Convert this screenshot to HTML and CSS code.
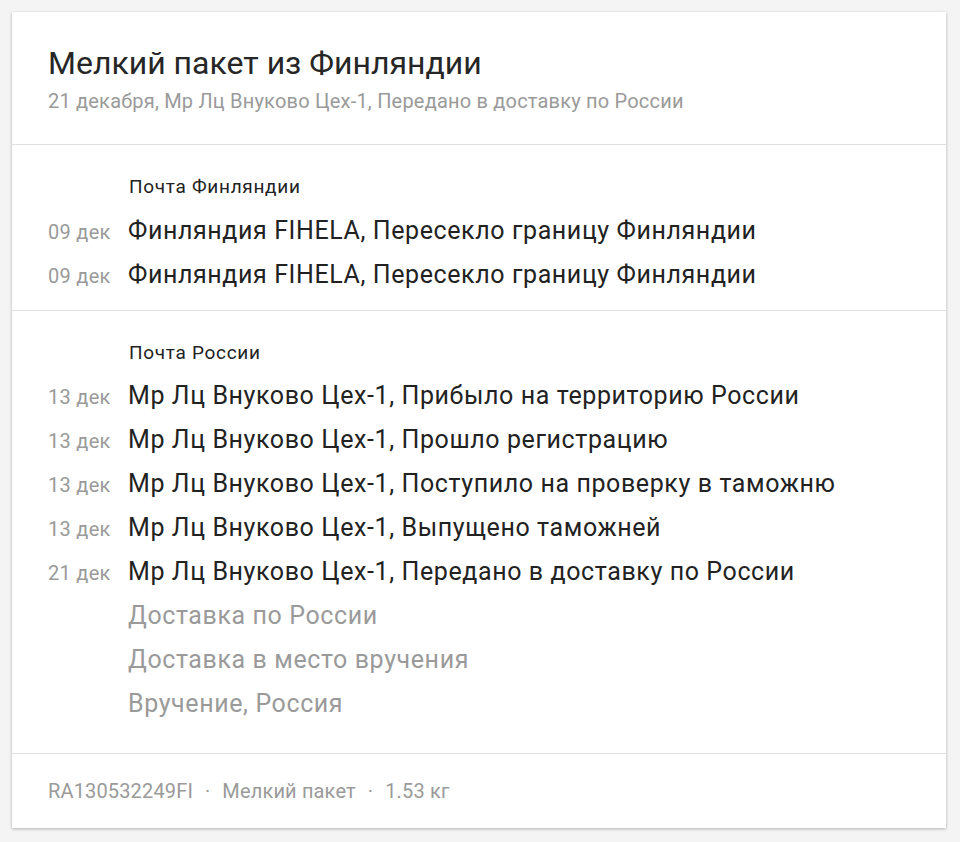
FILE: index.html
```html
<!DOCTYPE html>
<html lang="ru">
<head>
<meta charset="utf-8">
<title>Мелкий пакет из Финляндии</title>
<link rel="stylesheet" href="styles.css">
</head>
<body>
<div class="card">
  <header class="head">
    <h1 class="title">Мелкий пакет из Финляндии</h1>
    <div class="sub">21 декабря, Мр Лц Внуково Цех-1, Передано в доставку по России</div>
  </header>
  <section class="group g1">
    <div class="label">Почта Финляндии</div>
    <div class="row"><span class="date">09 дек</span><span class="ev">Финляндия FIHELA, Пересекло границу Финляндии</span></div>
    <div class="row"><span class="date">09 дек</span><span class="ev">Финляндия FIHELA, Пересекло границу Финляндии</span></div>
  </section>
  <section class="group g2">
    <div class="label">Почта России</div>
    <div class="row"><span class="date">13 дек</span><span class="ev">Мр Лц Внуково Цех-1, Прибыло на территорию России</span></div>
    <div class="row"><span class="date">13 дек</span><span class="ev">Мр Лц Внуково Цех-1, Прошло регистрацию</span></div>
    <div class="row"><span class="date">13 дек</span><span class="ev">Мр Лц Внуково Цех-1, Поступило на проверку в таможню</span></div>
    <div class="row"><span class="date">13 дек</span><span class="ev">Мр Лц Внуково Цех-1, Выпущено таможней</span></div>
    <div class="row"><span class="date">21 дек</span><span class="ev">Мр Лц Внуково Цех-1, Передано в доставку по России</span></div>
    <div class="row future"><span class="date"></span><span class="ev">Доставка по России</span></div>
    <div class="row future"><span class="date"></span><span class="ev">Доставка в место вручения</span></div>
    <div class="row future"><span class="date"></span><span class="ev">Вручение, Россия</span></div>
  </section>
  <footer class="foot">
    <span>RA130532249FI</span><span class="dot">·</span><span>Мелкий пакет</span><span class="dot">·</span><span>1.53 кг</span>
  </footer>
</div>
</body>
</html>
```

FILE: styles.css
```css
html, body {
  margin: 0;
  padding: 0;
  background: #f4f4f4;
}
body {
  padding: 12px 14px 14px 12px;
  font-family: Roboto, "Noto Sans", sans-serif;
  color: #212121;
}
.card {
  width: 934px;
  background: #fff;
  box-shadow: 0 1px 3px rgba(0,0,0,0.28);
}
.head {
  padding: 33px 36px 31px 36px;
  border-bottom: 1px solid #e2e2e2;
}
.title {
  margin: 0;
  font-size: 32px;
  font-weight: 400;
  line-height: 36px;
  color: #262626;
}
.sub {
  margin-top: 8px;
  font-size: 20px;
  letter-spacing: 0.2px;
  line-height: 24px;
  color: #9a9a9a;
}
.group {
  padding: 30px 36px 13px 36px;
  border-bottom: 1px solid #e2e2e2;
}
.g1 .label {
  margin-bottom: 10px;
}
.g2 {
  padding-bottom: 27px;
}
.g2 .label {
  margin-bottom: 9px;
}
.label {
  padding-left: 81px;
  font-size: 19px;
  letter-spacing: 0.7px;
  line-height: 24px;
  color: #222;
}
.row {
  display: flex;
  align-items: baseline;
  height: 44px;
  line-height: 44px;
}
.date {
  width: 80px;
  flex: none;
  font-size: 20px;
  letter-spacing: 0.3px;
  color: #9a9a9a;
}
.ev {
  font-size: 25px;
  letter-spacing: 0.6px;
  color: #222;
}
.future .ev {
  color: #9a9a9a;
}
.foot {
  padding: 25px 36px 25px 36px;
  font-size: 20px;
  letter-spacing: 0.15px;
  line-height: 24px;
  color: #9a9a9a;
}
.dot {
  margin: 0 12px;
}
```
